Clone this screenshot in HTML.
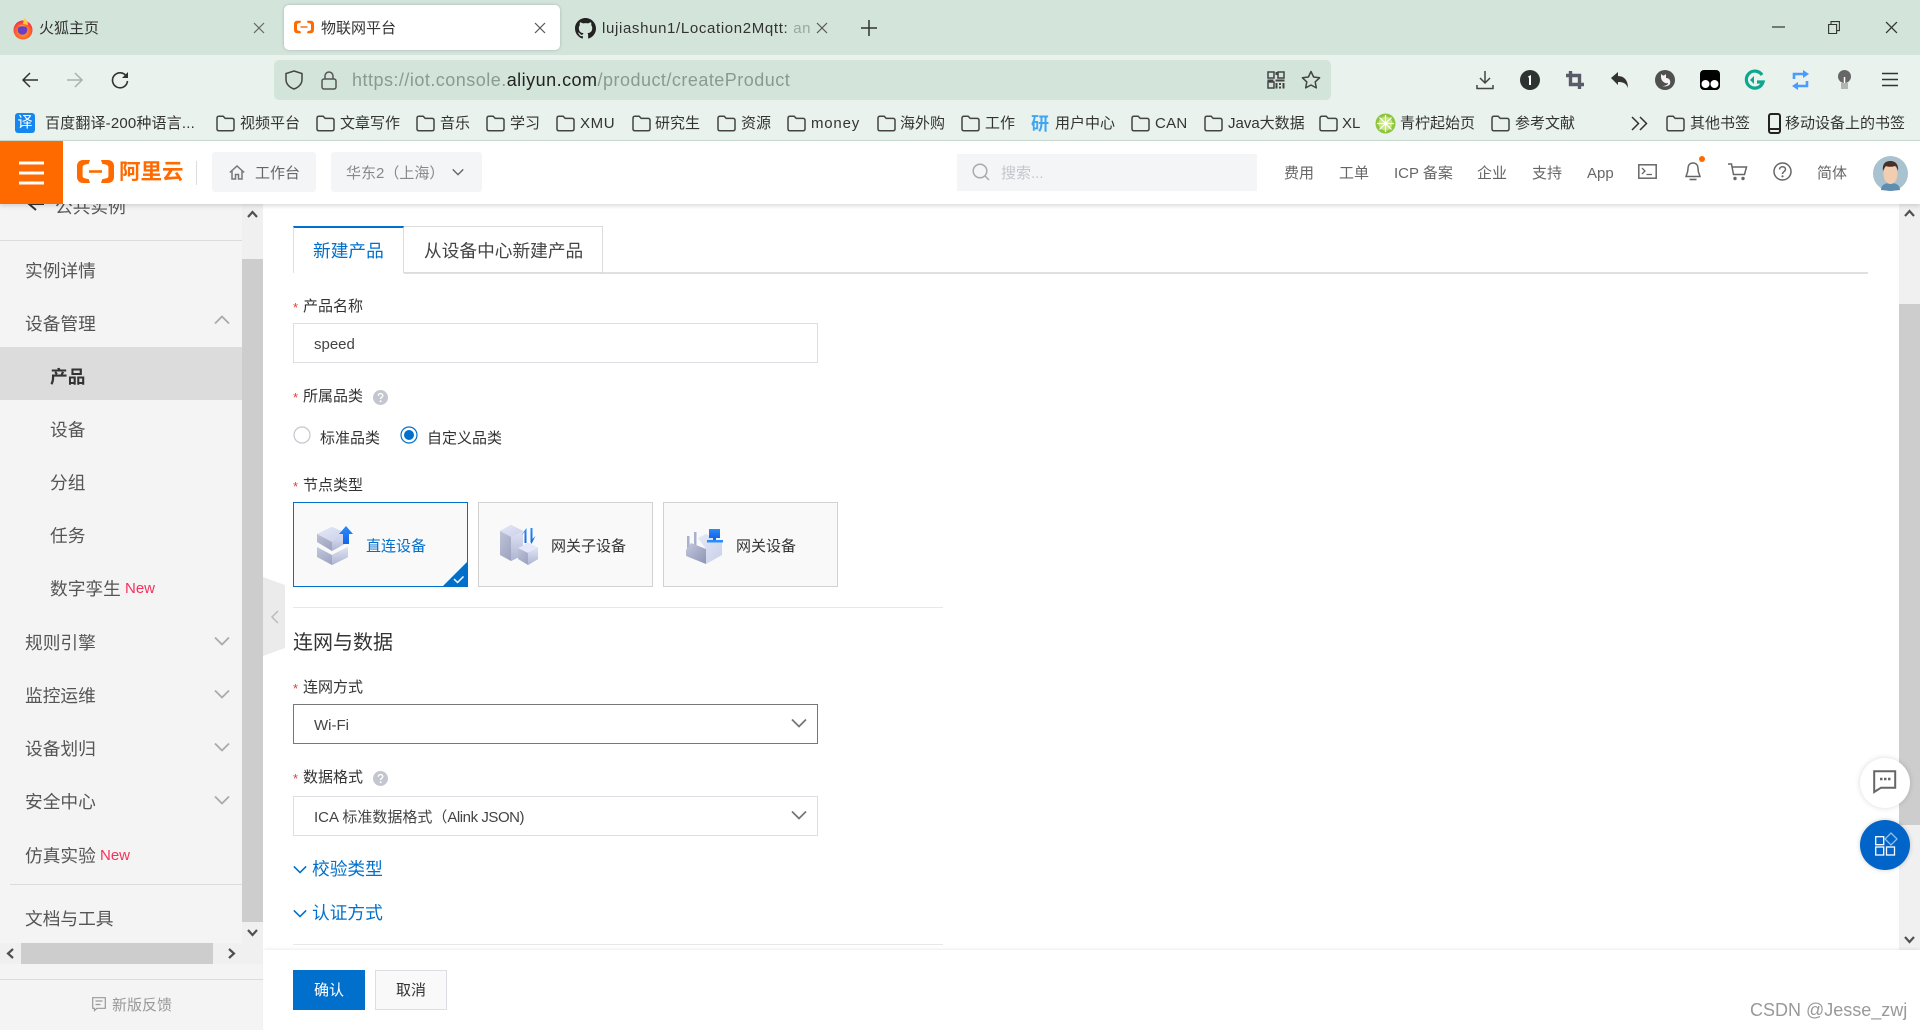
<!DOCTYPE html>
<html lang="zh"><head><meta charset="utf-8"><title>物联网平台</title>
<style>
*{box-sizing:border-box}
html,body{margin:0;padding:0;width:1920px;height:1030px;overflow:hidden;background:#fff;font-family:"Liberation Sans","Noto Sans CJK SC",sans-serif;color:#333}
div,span.t,svg.a{position:absolute}
.t{position:absolute;white-space:nowrap;height:24px;line-height:24px;margin-top:-11px;font-size:15px}
.m{font-size:17.7px;color:#555}
.s{font-size:17.7px;color:#555}
.n{color:#f5325b;font-size:15px}
.l{color:#333}
.l i{position:absolute;left:-10px;top:1px;font-style:normal;color:#e23c39;font-size:13px}
.h{color:#666}
.box{border:1.5px solid #dcdee3;background:#fff}
.card{top:502px;height:85px;width:175px;border:1.5px solid #d2d2d2;background:#f9f9f9}
svg{overflow:visible}
</style></head><body>
<svg width="0" height="0" style="position:absolute"><defs>
<symbol id="folder" viewBox="0 0 19 17"><path d="M1 3.2C1 2 1.8 1.2 3 1.2h4.2l2 2.2H16c1.2 0 2 .8 2 2v8.4c0 1.200-.8 2-2 2H3c-1.200 0-2-.8-2-2z" fill="none" stroke="#444" stroke-width="1.500"/></symbol>
<symbol id="ali" viewBox="0 0 37 23"><path fill="#ff6a00" d="M13 0H6C2.500 0 0 2.500 0 6v11c0 3.500 2.500 6 6 6h7l-1.200-3.800-4.200-.9c-1.100-.3-2-1.100-2-2.300V7c0-1.200.9-2 2-2.300l4.200-.9zM24 0h7c3.500 0 6 2.500 6 6v11c0 3.500-2.500 6-6 6h-7l1.200-3.800 4.200-.9c1.100-.3 2-1.100 2-2.300V7c0-1.200-.9-2-2-2.300l-4.200-.9z"/><rect x="12" y="10.200" width="13" height="2.600" fill="#ff6a00"/></symbol>
<symbol id="chev" viewBox="0 0 16 10"><path d="M1 1.500l7 7 7-7" fill="none" stroke="currentColor" stroke-width="1.800"/></symbol>
<symbol id="x" viewBox="0 0 12 12"><path d="M1 1l10 10M11 1L1 11" fill="none" stroke="currentColor" stroke-width="1.200"/></symbol>
<symbol id="help" viewBox="0 0 15 15"><circle cx="7.500" cy="7.500" r="7.500" fill="#c4c6cf"/><path d="M5.300 5.800c0-1.400 1-2.200 2.200-2.200s2.300.8 2.300 2c0 1.600-2.200 1.600-2.200 3.400" fill="none" stroke="#fff" stroke-width="1.400"/><circle cx="7.600" cy="11.300" r="1" fill="#fff"/></symbol>
<linearGradient id="gb" x1="0" y1="0" x2="1" y2="1"><stop offset="0" stop-color="#e4e8f8"/><stop offset="1" stop-color="#c9cfe8"/></linearGradient>
<linearGradient id="gl" x1="0" y1="0" x2="1" y2="1"><stop offset="0" stop-color="#c3c8dc"/><stop offset="1" stop-color="#8d94b4"/></linearGradient>
<linearGradient id="gr" x1="0" y1="0" x2="0" y2="1"><stop offset="0" stop-color="#dfe3f4"/><stop offset="1" stop-color="#aeb5d2"/></linearGradient>
<linearGradient id="ga" x1="0" y1="0" x2="0" y2="1"><stop offset="0" stop-color="#2a8cf8"/><stop offset="1" stop-color="#1565e8"/></linearGradient>
<radialGradient id="ff" cx=".5" cy=".6" r=".6"><stop offset="0" stop-color="#ffb02e"/><stop offset=".7" stop-color="#ff5a2a"/><stop offset="1" stop-color="#e8255f"/></radialGradient>
</defs></svg>

<!-- tab strip -->
<div style="left:0;top:0;width:1920px;height:55px;background:#d3e4da"></div>
<div style="left:284px;top:5px;width:276px;height:45px;background:#fff;border-radius:5px;box-shadow:0 0 3px rgba(0,0,0,.2)"></div>
<svg class="a" style="left:13px;top:18px" width="20" height="22" viewBox="0 0 20 22"><circle cx="10" cy="12" r="9.500" fill="url(#ff)"/><path d="M11 0c2 2 4 3 4 7l-5-1z" fill="#ffc93a"/><circle cx="9.500" cy="12" r="4.800" fill="#6a3fc8"/><path d="M5 9c2-3 6-3 8 0-2-1-5-1-8 0z" fill="#ff9a2e"/></svg>
<span class="t" style="left:39px;top:28px">火狐主页</span>
<svg class="a" style="left:253px;top:22px;color:#666" width="12" height="12"><use href="#x"/></svg>
<svg class="a" style="left:294px;top:20px" width="20" height="14"><use href="#ali"/></svg>
<span class="t" style="left:321px;top:28px">物联网平台</span>
<svg class="a" style="left:534px;top:22px;color:#555" width="12" height="12"><use href="#x"/></svg>
<svg class="a" style="left:575px;top:18px" width="21" height="21" viewBox="0 0 16 16"><path fill="#222" d="M8 0C3.580 0 0 3.580 0 8c0 3.540 2.290 6.530 5.470 7.590.4.070.55-.17.55-.38 0-.19-.01-.82-.01-1.490-2.010.37-2.530-.49-2.690-.94-.09-.23-.48-.94-.82-1.130-.28-.15-.68-.52-.01-.53.63-.01 1.080.58 1.230.82.72 1.210 1.870.87 2.330.66.070-.52.28-.87.51-1.070-1.780-.2-3.640-.89-3.640-3.950 0-.87.31-1.590.82-2.150-.08-.2-.36-1.020.08-2.120 0 0 .67-.21 2.200.82.64-.18 1.320-.27 2-.27.68 0 1.360.09 2 .27 1.530-1.040 2.200-.82 2.200-.82.44 1.100.16 1.920.08 2.120.51.56.82 1.270.82 2.150 0 3.070-1.870 3.750-3.650 3.950.29.25.54.73.54 1.480 0 1.070-.01 1.930-.01 2.200 0 .21.15.46.55.38A8.013 8.013 0 0016 8c0-4.420-3.580-8-8-8z"/></svg>
<span class="t" style="left:602px;top:28px;letter-spacing:.65px">lujiashun1/Location2Mqtt: <span style="color:#9aa8a0">an</span></span>
<svg class="a" style="left:816px;top:22px;color:#555" width="12" height="12"><use href="#x"/></svg>
<svg class="a" style="left:861px;top:20px" width="16" height="16"><path d="M8 0v16M0 8h16" stroke="#333" stroke-width="1.500"/></svg>
<svg class="a" style="left:1772px;top:20px" width="13" height="13"><path d="M0 7h13" stroke="#333" stroke-width="1.200"/></svg>
<svg class="a" style="left:1828px;top:21px" width="12" height="13"><path d="M.6 3.500h8v9h-8zM3 3.500V.6h8.400v9H8.600" fill="none" stroke="#333" stroke-width="1.100"/></svg>
<svg class="a" style="left:1885px;top:21px;color:#333" width="13" height="13"><use href="#x"/></svg>

<!-- toolbar -->
<div style="left:0;top:55px;width:1920px;height:86px;background:#e9f2ed;border-bottom:1px solid #c9ded3"></div>
<svg class="a" style="left:21px;top:71px" width="18" height="18"><path d="M17 9H2M9 2L2 9l7 7" fill="none" stroke="#333" stroke-width="1.500"/></svg>
<svg class="a" style="left:66px;top:71px" width="18" height="18"><path d="M1 9h15M9 2l7 7-7 7" fill="none" stroke="#a9b3ad" stroke-width="1.500"/></svg>
<svg class="a" style="left:111px;top:71px" width="18" height="18"><path d="M15.500 5.500A7.500 7.500 0 1 0 16.500 10" fill="none" stroke="#333" stroke-width="1.600"/><path d="M17 1v6h-6z" fill="#333"/></svg>
<div style="left:274px;top:60px;width:1057px;height:40px;background:#d3e4da;border-radius:5px"></div>
<svg class="a" style="left:285px;top:70px" width="18" height="20"><path d="M9 1l8 2.500v6C17 14 13.500 17.500 9 19 4.500 17.500 1 14 1 9.500v-6z" fill="none" stroke="#444" stroke-width="1.500"/></svg>
<svg class="a" style="left:321px;top:71px" width="16" height="19"><rect x="1" y="8" width="14" height="10" rx="2" fill="none" stroke="#555" stroke-width="1.500"/><path d="M4 8V5a4 4 0 0 1 8 0v3" fill="none" stroke="#555" stroke-width="1.500"/></svg>
<span class="t" style="left:352px;top:79px;font-size:18px;letter-spacing:.48px;color:#8a9a91">https://iot.console.<span style="color:#222">aliyun.com</span>/product/createProduct</span>
<svg class="a" style="left:1267px;top:71px" width="18" height="18"><g fill="none" stroke="#444" stroke-width="1.500"><rect x="1" y="1" width="6" height="6"/><rect x="11" y="1" width="6" height="6"/><rect x="1" y="11" width="6" height="6"/></g><path d="M8.500 1h2v3h-2zM8.500 8.500h9v2h-9zM.5 8.500h6v2h-6zM8.500 12h2v5.500h-2zM12 12h2v2h-2zM15.500 12h2v5.500h-2zM12 15.500h2v2h-2z" fill="#444"/></svg>
<svg class="a" style="left:1301px;top:70px" width="20" height="20"><path d="M10 1.500l2.600 5.500 6 .8-4.400 4.100 1.100 6L10 15l-5.300 2.900 1.100-6L1.400 7.800l6-.8z" fill="none" stroke="#444" stroke-width="1.500" stroke-linejoin="round"/></svg>
<svg class="a" style="left:1476px;top:70px" width="18" height="20"><path d="M9 1v12M4 8l5 5 5-5M1 15v3.500h16V15" fill="none" stroke="#444" stroke-width="1.500"/></svg>
<svg class="a" style="left:1520px;top:70px" width="20" height="20"><circle cx="10" cy="10" r="10" fill="#2d3330"/><path d="M8 6.500l3-1.500v10H9V8z" fill="#fff"/></svg>
<svg class="a" style="left:1566px;top:71px" width="18" height="18"><path d="M4.500 0v13.500H18M0 4.500h13.500V18" fill="none" stroke="#5a5a68" stroke-width="3.400"/></svg>
<svg class="a" style="left:1611px;top:71px" width="18" height="18"><path d="M0 7l7-6v4c6 0 10 4 10 12-2-5-5-6-10-6v3z" fill="#333"/></svg>
<svg class="a" style="left:1655px;top:70px" width="20" height="20"><circle cx="10" cy="10" r="10" fill="#505050"/><path d="M6 4l2 1.500h1L11 4v4c3 0 5 2 4 6-1 2-5 3-8 2 3 0 6-1 6-3-3 1-7-2-7-6z" fill="#f4f4f4"/></svg>
<svg class="a" style="left:1700px;top:70px" width="20" height="20"><rect width="20" height="20" rx="4" fill="#000"/><circle cx="5.500" cy="14" r="4" fill="#fff"/><circle cx="14.500" cy="14" r="4" fill="#fff"/></svg>
<svg class="a" style="left:1745px;top:70px" width="20" height="20"><path d="M17 5A8.500 8.500 0 1 0 18 12h-6" fill="none" stroke="#0ba88f" stroke-width="3.200"/><path d="M9 6l-4 4 4 4z" fill="#0ba88f"/></svg>
<svg class="a" style="left:1791px;top:70px" width="19" height="20"><path d="M3 9V4h11M16 11v5H5" fill="none" stroke="#4a9bff" stroke-width="2.600"/><path d="M12 0l6 4-6 4zM7 12l-6 4 6 4z" fill="#4a9bff"/></svg>
<svg class="a" style="left:1837px;top:70px" width="15" height="20"><circle cx="7.500" cy="6.500" r="6.500" fill="#666"/><path d="M7.500 7v6" stroke="#fff" stroke-width="1.500"/><rect x="4" y="13" width="7" height="6" fill="#b4b4b4"/></svg>
<svg class="a" style="left:1882px;top:72px" width="16" height="15"><path d="M0 1.500h16M0 7.500h16M0 13.500h16" stroke="#333" stroke-width="1.600"/></svg>

<!-- bookmarks -->
<div style="left:15px;top:113px;width:20px;height:20px;background:#1687f0;border-radius:3px;color:#fff;font-size:15px;line-height:20px;text-align:center">译</div>
<span class="t" style="left:45px;top:123px;letter-spacing:.17px">百度翻译-200种语言...</span>
<svg class="a" style="left:216px;top:115px" width="19" height="17"><use href="#folder"/></svg><span class="t" style="left:240px;top:123px">视频平台</span>
<svg class="a" style="left:316px;top:115px" width="19" height="17"><use href="#folder"/></svg><span class="t" style="left:340px;top:123px">文章写作</span>
<svg class="a" style="left:416px;top:115px" width="19" height="17"><use href="#folder"/></svg><span class="t" style="left:440px;top:123px">音乐</span>
<svg class="a" style="left:486px;top:115px" width="19" height="17"><use href="#folder"/></svg><span class="t" style="left:510px;top:123px">学习</span>
<svg class="a" style="left:556px;top:115px" width="19" height="17"><use href="#folder"/></svg><span class="t" style="left:580px;top:123px;letter-spacing:.6px">XMU</span>
<svg class="a" style="left:632px;top:115px" width="19" height="17"><use href="#folder"/></svg><span class="t" style="left:655px;top:123px">研究生</span>
<svg class="a" style="left:717px;top:115px" width="19" height="17"><use href="#folder"/></svg><span class="t" style="left:741px;top:123px">资源</span>
<svg class="a" style="left:787px;top:115px" width="19" height="17"><use href="#folder"/></svg><span class="t" style="left:811px;top:123px;letter-spacing:.8px">money</span>
<svg class="a" style="left:877px;top:115px" width="19" height="17"><use href="#folder"/></svg><span class="t" style="left:900px;top:123px">海外购</span>
<svg class="a" style="left:961px;top:115px" width="19" height="17"><use href="#folder"/></svg><span class="t" style="left:985px;top:123px">工作</span>
<span class="t" style="left:1031px;top:123px;font-size:18px;font-weight:700;color:#3ea6f5">研</span>
<span class="t" style="left:1055px;top:123px">用户中心</span>
<svg class="a" style="left:1131px;top:115px" width="19" height="17"><use href="#folder"/></svg><span class="t" style="left:1155px;top:123px;letter-spacing:.3px">CAN</span>
<svg class="a" style="left:1204px;top:115px" width="19" height="17"><use href="#folder"/></svg><span class="t" style="left:1228px;top:123px">Java大数据</span>
<svg class="a" style="left:1319px;top:115px" width="19" height="17"><use href="#folder"/></svg><span class="t" style="left:1342px;top:123px">XL</span>
<svg class="a" style="left:1375px;top:113px" width="21" height="21"><circle cx="10.500" cy="10.500" r="10" fill="#8cc63f"/><circle cx="10.500" cy="10.500" r="7" fill="#c7e57e"/><path d="M10.500 2v17M2 10.500h17M4.500 4.500l12 12M16.500 4.500l-12 12" stroke="#fff" stroke-width="1.200"/></svg>
<span class="t" style="left:1400px;top:123px">青柠起始页</span>
<svg class="a" style="left:1491px;top:115px" width="19" height="17"><use href="#folder"/></svg><span class="t" style="left:1515px;top:123px">参考文献</span>
<svg class="a" style="left:1631px;top:116px" width="17" height="15"><path d="M1 1l6.500 6.500L1 14M9 1l6.500 6.500L9 14" fill="none" stroke="#333" stroke-width="1.500"/></svg>
<svg class="a" style="left:1666px;top:115px" width="19" height="17"><use href="#folder"/></svg><span class="t" style="left:1690px;top:123px">其他书签</span>
<svg class="a" style="left:1768px;top:113px" width="13" height="21"><rect x="1" y="1" width="11" height="19" rx="2" fill="none" stroke="#222" stroke-width="2"/><path d="M1 16h11" stroke="#222" stroke-width="2"/></svg>
<span class="t" style="left:1785px;top:123px">移动设备上的书签</span>

<!-- sidebar -->
<div style="left:0;top:204px;width:263px;height:826px;background:#f4f4f4"></div>
<svg class="a" style="left:27px;top:198px" width="18" height="14"><path d="M17 6H3M9 0L2 6l7 6" fill="none" stroke="#333" stroke-width="2"/></svg>
<span class="t m" style="left:55px;top:206px">公共实例</span>
<div style="left:0;top:240px;width:242px;height:1px;background:#dcdcdc"></div>
<span class="t m" style="left:25px;top:270px">实例详情</span>
<span class="t m" style="left:25px;top:323px">设备管理</span>
<svg class="a" style="left:214px;top:315px;color:#aaa;transform:rotate(180deg)" width="16" height="10"><use href="#chev"/></svg>
<div style="left:0;top:347px;width:242px;height:53px;background:#dcdcdc"></div>
<span class="t s" style="left:50px;top:376px;color:#333;font-weight:700">产品</span>
<span class="t s" style="left:50px;top:429px">设备</span>
<span class="t s" style="left:50px;top:482px">分组</span>
<span class="t s" style="left:50px;top:535px">任务</span>
<span class="t s" style="left:50px;top:588px">数字孪生</span><span class="t n" style="left:125px;top:588px">New</span>
<span class="t m" style="left:25px;top:642px">规则引擎</span>
<svg class="a" style="left:214px;top:636px;color:#aaa" width="16" height="10"><use href="#chev"/></svg>
<span class="t m" style="left:25px;top:695px">监控运维</span>
<svg class="a" style="left:214px;top:689px;color:#aaa" width="16" height="10"><use href="#chev"/></svg>
<span class="t m" style="left:25px;top:748px">设备划归</span>
<svg class="a" style="left:214px;top:742px;color:#aaa" width="16" height="10"><use href="#chev"/></svg>
<span class="t m" style="left:25px;top:801px">安全中心</span>
<svg class="a" style="left:214px;top:795px;color:#aaa" width="16" height="10"><use href="#chev"/></svg>
<span class="t m" style="left:25px;top:855px">仿真实验</span><span class="t n" style="left:100px;top:855px">New</span>
<div style="left:10px;top:884px;width:232px;height:1px;background:#dcdcdc"></div>
<span class="t m" style="left:25px;top:918px">文档与工具</span>
<!-- sidebar scrollbars -->
<div style="left:242px;top:204px;width:21px;height:739px;background:#f0f0f0"></div>
<div style="left:242px;top:259px;width:21px;height:663px;background:#cdcdcd"></div>
<svg class="a" style="left:247px;top:210px" width="11" height="8"><path d="M1 7l4.500-5L10 7" fill="none" stroke="#505050" stroke-width="2.200"/></svg>
<svg class="a" style="left:247px;top:929px" width="11" height="8"><path d="M1 1l4.500 5L10 1" fill="none" stroke="#505050" stroke-width="2.200"/></svg>
<div style="left:0;top:943px;width:263px;height:21px;background:#f0f0f0"></div>
<div style="left:21px;top:943px;width:192px;height:21px;background:#cdcdcd"></div>
<svg class="a" style="left:6px;top:948px" width="8" height="11"><path d="M7 1L2 5.500 7 10" fill="none" stroke="#505050" stroke-width="2.200"/></svg>
<svg class="a" style="left:228px;top:948px" width="8" height="11"><path d="M1 1l5 4.500L1 10" fill="none" stroke="#505050" stroke-width="2.200"/></svg>
<div style="left:0;top:979px;width:263px;height:1px;background:#dcdcdc"></div>
<svg class="a" style="left:92px;top:997px" width="14" height="15"><path d="M.7.700h12.600v10.600H5L2.500 13.500v-2.200H.7zM3.500 4h7M3.500 7.500h5" fill="none" stroke="#999" stroke-width="1.200"/></svg>
<span class="t" style="left:112px;top:1005px;color:#999">新版反馈</span>

<!-- handle -->
<svg class="a" style="left:263px;top:577px" width="22" height="79"><path d="M0 0l22 8v63L0 79z" fill="#ebebeb"/><path d="M15 34l-6 6 6 6" fill="none" stroke="#bbb" stroke-width="1.500"/></svg>

<!-- main tabs -->
<div style="left:404px;top:272px;width:1464px;height:1.500px;background:#e0e0e0"></div>
<div style="left:293px;top:226px;width:111px;height:47px;background:#fff;border-top:2px solid #006fcf;border-left:1px solid #e0e0e0;border-right:1.500px solid #dcdcdc"></div>
<div style="left:404px;top:226px;width:199px;height:47px;background:#fff;border:1.500px solid #dcdcdc;border-left:0"></div>
<span class="t" style="left:313px;top:250px;font-size:17.700px;color:#0070cc">新建产品</span>
<span class="t" style="left:424px;top:250px;font-size:17.700px;color:#444">从设备中心新建产品</span>

<span class="t l" style="left:303px;top:306px"><i>*</i>产品名称</span>
<div class="box" style="left:293px;top:323px;width:525px;height:40px"></div>
<span class="t" style="left:314px;top:344px;color:#444">speed</span>

<span class="t l" style="left:303px;top:396px"><i>*</i>所属品类</span>
<svg class="a" style="left:373px;top:390px" width="15" height="15"><use href="#help"/></svg>
<svg class="a" style="left:293px;top:426px" width="18" height="18"><circle cx="9" cy="9" r="8" fill="#fff" stroke="#c4c6cf" stroke-width="1.200"/></svg>
<span class="t" style="left:320px;top:438px">标准品类</span>
<svg class="a" style="left:400px;top:426px" width="18" height="18"><circle cx="9" cy="9" r="8" fill="#fff" stroke="#0070cc" stroke-width="1.200"/><circle cx="9" cy="9" r="5" fill="#0070cc"/></svg>
<span class="t" style="left:427px;top:438px">自定义品类</span>

<span class="t l" style="left:303px;top:485px"><i>*</i>节点类型</span>

<div class="card" style="left:293px;border-color:#0070cc"></div>
<svg class="a" style="left:442px;top:561px" width="26" height="26"><path d="M26 0v26H0z" fill="#0070cc"/><path d="M12 18l3.500 3.500 6-6" fill="none" stroke="#fff" stroke-width="1.500"/></svg>
<svg class="a" style="left:317px;top:526px" width="36" height="39" viewBox="0 0 36 39">
<path d="M0 21l0 10 15 8 16-8V21l-16 8z" fill="url(#gl)"/><path d="M15 29l16-8v10l-16 8z" fill="url(#gr)"/>
<path d="M0 8l15-7 16 7v8l-16 9-15-9z" fill="url(#gl)"/><path d="M0 8l15-7 16 7-16 8z" fill="url(#gb)"/><path d="M15 16l16-8v8l-16 9z" fill="url(#gr)"/>
<path d="M29 0l7 8h-4v10h-6V8h-4z" fill="url(#ga)"/></svg>
<span class="t" style="left:366px;top:546px;color:#0070cc">直连设备</span>

<div class="card" style="left:478px"></div>
<svg class="a" style="left:500px;top:525px" width="39" height="40" viewBox="0 0 39 40">
<path d="M0 6l11-6 12 6v24l-12 6-11-6z" fill="url(#gl)"/><path d="M0 6l11-6 12 6-12 6z" fill="url(#gb)"/><path d="M11 12l12-6v24l-12 6z" fill="url(#gr)"/>
<path d="M18 23l10-5 10 5v11l-10 6-10-6z" fill="url(#gl)"/><path d="M18 23l10-5 10 5-10 5z" fill="#e4e8f8"/><path d="M28 28l10-5v11l-10 6z" fill="url(#gr)"/>
<path d="M26.500 3v15h-2V7l-3 3zM30.500 3h2v11l3-3-4 8-1-2z" fill="url(#ga)"/></svg>
<span class="t" style="left:551px;top:546px">网关子设备</span>

<div class="card" style="left:663px"></div>
<svg class="a" style="left:686px;top:529px" width="38" height="35" viewBox="0 0 38 35">
<rect x="1" y="7" width="2.500" height="20" fill="#a9b0cc"/><rect x="8" y="3" width="2.500" height="19" fill="#a9b0cc"/>
<path d="M12 9l8-4 16 9v12l-16 9V20z" fill="url(#gb)"/><path d="M20 35V20L5 14l-5 7v6z" fill="url(#gl)"/>
<rect x="23" y="0" width="11" height="9" fill="url(#ga)"/><rect x="27" y="9" width="3" height="3" fill="#1565e8"/><rect x="21" y="11" width="16" height="2.500" fill="#2a8cf8"/></svg>
<span class="t" style="left:736px;top:546px">网关设备</span>

<div style="left:293px;top:607px;width:650px;height:1px;background:#e8e8e8"></div>
<span class="t" style="left:293px;top:642px;font-size:20px;color:#333">连网与数据</span>

<span class="t l" style="left:303px;top:687px"><i>*</i>连网方式</span>
<div style="left:293px;top:704px;width:525px;height:40px;border:1.500px solid #777;background:#fff"></div>
<span class="t" style="left:314px;top:725px;color:#444">Wi-Fi</span>
<svg class="a" style="left:791px;top:718px;color:#777" width="16" height="10"><use href="#chev"/></svg>

<span class="t l" style="left:303px;top:777px"><i>*</i>数据格式</span>
<svg class="a" style="left:373px;top:771px" width="15" height="15"><use href="#help"/></svg>
<div class="box" style="left:293px;top:796px;width:525px;height:40px"></div>
<span class="t" style="left:314px;top:817px;color:#444">ICA 标准数据格式（<span style="letter-spacing:-.45px">Alink JSON)</span></span>
<svg class="a" style="left:791px;top:810px;color:#777" width="16" height="10"><use href="#chev"/></svg>

<svg class="a" style="left:293px;top:865px;color:#0070cc" width="14" height="9"><use href="#chev"/></svg>
<span class="t" style="left:312px;top:868px;font-size:17.700px;color:#0070cc">校验类型</span>
<svg class="a" style="left:293px;top:909px;color:#0070cc" width="14" height="9"><use href="#chev"/></svg>
<span class="t" style="left:312px;top:912px;font-size:17.700px;color:#0070cc">认证方式</span>
<div style="left:293px;top:944px;width:650px;height:1px;background:#e8e8e8"></div>

<!-- right scrollbar -->
<div style="left:1899px;top:204px;width:21px;height:746px;background:#f0f0f0"></div>
<div style="left:1899px;top:304px;width:21px;height:521px;background:#cdcdcd"></div>
<svg class="a" style="left:1904px;top:209px" width="11" height="8"><path d="M1 7l4.500-5L10 7" fill="none" stroke="#505050" stroke-width="2.200"/></svg>
<svg class="a" style="left:1904px;top:936px" width="11" height="8"><path d="M1 1l4.500 5L10 1" fill="none" stroke="#505050" stroke-width="2.200"/></svg>

<!-- bottom bar -->
<div style="left:263px;top:950px;width:1657px;height:80px;background:#fff;box-shadow:0 -2px 3px -1px rgba(0,0,0,.08)"></div>
<div style="left:263px;top:950px;width:3px;height:80px;background:#fff"></div>
<div style="left:293px;top:970px;width:72px;height:40px;background:#0070cc;color:#fff;font-size:15px;line-height:42px;text-align:center">确认</div>
<div style="left:375px;top:970px;width:72px;height:40px;background:#f9f9f9;border:1.500px solid #dcdee3;color:#333;font-size:15px;line-height:39px;text-align:center">取消</div>
<span class="t" style="left:1750px;top:1009px;font-size:18px;color:#999">CSDN @Jesse_zwj</span>

<!-- floats -->
<div style="left:1860px;top:758px;width:50px;height:50px;border-radius:50%;background:#fff;box-shadow:0 0 6px rgba(0,0,0,.15)"></div>
<svg class="a" style="left:1873px;top:770px" width="24" height="23"><path d="M1.200 1.200h21v16.500H8L1.200 22z" fill="none" stroke="#666" stroke-width="2"/><path d="M7 9h2.500M11 9h2.500M15 9h2.500" stroke="#666" stroke-width="2.500"/></svg>
<div style="left:1860px;top:820px;width:50px;height:50px;border-radius:50%;background:#0064c8;box-shadow:0 0 5px rgba(0,0,0,.2)"></div>
<svg class="a" style="left:1875px;top:832px" width="24" height="24"><g fill="none" stroke="#fff" stroke-width="1.300"><rect x=".7" y="4.700" width="8" height="8"/><rect x=".7" y="15" width="8" height="8"/><rect x="11.500" y="15" width="8" height="8"/></g><path d="M16 1l6 6-6 6-6-6z" fill="none" stroke="#8fc0f0" stroke-width="1.300"/></svg>

<!-- console header -->
<div style="left:0;top:141px;width:1920px;height:63px;background:#fff;box-shadow:0 2px 4px rgba(0,0,0,.14)"></div>
<div style="left:0;top:141px;width:63px;height:63px;background:#ff6a00"></div>
<svg class="a" style="left:19px;top:161px" width="25" height="24"><path d="M0 2h25M0 12h25M0 22h25" stroke="#fff" stroke-width="3"/></svg>
<svg class="a" style="left:77px;top:160px" width="37" height="23"><use href="#ali"/></svg>
<span class="t" style="left:119px;top:171px;font-size:21.500px;font-weight:700;color:#ff6a00">阿里云</span>
<div style="left:196px;top:161px;width:1px;height:24px;background:#ddd"></div>
<div style="left:212px;top:152px;width:104px;height:40px;background:#f4f5f6;border-radius:3px"></div>
<svg class="a" style="left:229px;top:165px" width="16" height="15"><path d="M.8 7.500L8 1l7.200 6.500M3 6v8h3.500V9.500h3V14H13V6" fill="none" stroke="#777" stroke-width="1.500"/></svg>
<span class="t h" style="left:255px;top:173px">工作台</span>
<div style="left:331px;top:152px;width:151px;height:40px;background:#f4f5f6;border-radius:3px"></div>
<span class="t" style="left:346px;top:173px;color:#888">华东2（上海）</span>
<svg class="a" style="left:452px;top:168px;color:#666" width="12" height="8"><use href="#chev"/></svg>
<div style="left:957px;top:154px;width:300px;height:37px;background:#f4f5f6"></div>
<svg class="a" style="left:972px;top:163px" width="18" height="18"><circle cx="8" cy="8" r="6.800" fill="none" stroke="#aaa" stroke-width="1.500"/><path d="M13 13l4 4" stroke="#aaa" stroke-width="1.500"/></svg>
<span class="t" style="left:1001px;top:173px;color:#c4c6cf">搜索...</span>
<span class="t h" style="left:1284px;top:173px">费用</span>
<span class="t h" style="left:1339px;top:173px">工单</span>
<span class="t h" style="left:1394px;top:173px">ICP 备案</span>
<span class="t h" style="left:1477px;top:173px">企业</span>
<span class="t h" style="left:1532px;top:173px">支持</span>
<span class="t h" style="left:1587px;top:173px">App</span>
<svg class="a" style="left:1638px;top:164px" width="19" height="15"><rect x=".8" y=".8" width="17.400" height="13.400" fill="none" stroke="#666" stroke-width="1.500"/><path d="M4 4l3 3-3 3M8.500 10.500H14" fill="none" stroke="#666" stroke-width="1.300"/></svg>
<svg class="a" style="left:1685px;top:162px" width="16" height="19"><path d="M8 1c-3.500 0-5 2.500-5 5.500 0 4-1.500 6-2 8h14c-.5-2-2-4-2-8C13 3.500 11.500 1 8 1z" fill="none" stroke="#666" stroke-width="1.500"/><path d="M4.500 17.500h7" stroke="#666" stroke-width="1.600"/></svg>
<div style="left:1699px;top:155.500px;width:6px;height:6px;border-radius:50%;background:#ff6a00"></div>
<svg class="a" style="left:1728px;top:163px" width="19" height="18"><path d="M0 1h3.500l2 10.500h11l2-7.500H4.500" fill="none" stroke="#666" stroke-width="1.500"/><circle cx="7" cy="15.500" r="1.700" fill="#666"/><circle cx="15" cy="15.500" r="1.700" fill="#666"/></svg>
<svg class="a" style="left:1773px;top:162px" width="19" height="19"><circle cx="9.500" cy="9.500" r="8.500" fill="none" stroke="#666" stroke-width="1.500"/><path d="M6.500 7.500C6.500 5.800 7.800 4.800 9.500 4.800s3 1 3 2.600c0 2.200-3 2.200-3 4.600" fill="none" stroke="#666" stroke-width="1.500"/><circle cx="9.500" cy="14.300" r="1.100" fill="#666"/></svg>
<span class="t h" style="left:1817px;top:173px">简体</span>
<svg class="a" style="left:1873px;top:156px" width="35" height="35" viewBox="0 0 35 35"><circle cx="17.500" cy="17.500" r="17.500" fill="#a8c2d0"/><path d="M8 34c0-5 4-7 9.500-7s9.500 2 9.500 7l-9.500 1z" fill="#5f8db0"/><ellipse cx="17.500" cy="18" rx="7" ry="10" fill="#f2cdb0"/><path d="M10 15c-1-8 3-10 7.500-10S26 8 25 15c-1-3-2-5-3-5-3 1-7 1-9 0-1 1-2 3-3 5z" fill="#4a2f25"/></svg>
</body></html>
